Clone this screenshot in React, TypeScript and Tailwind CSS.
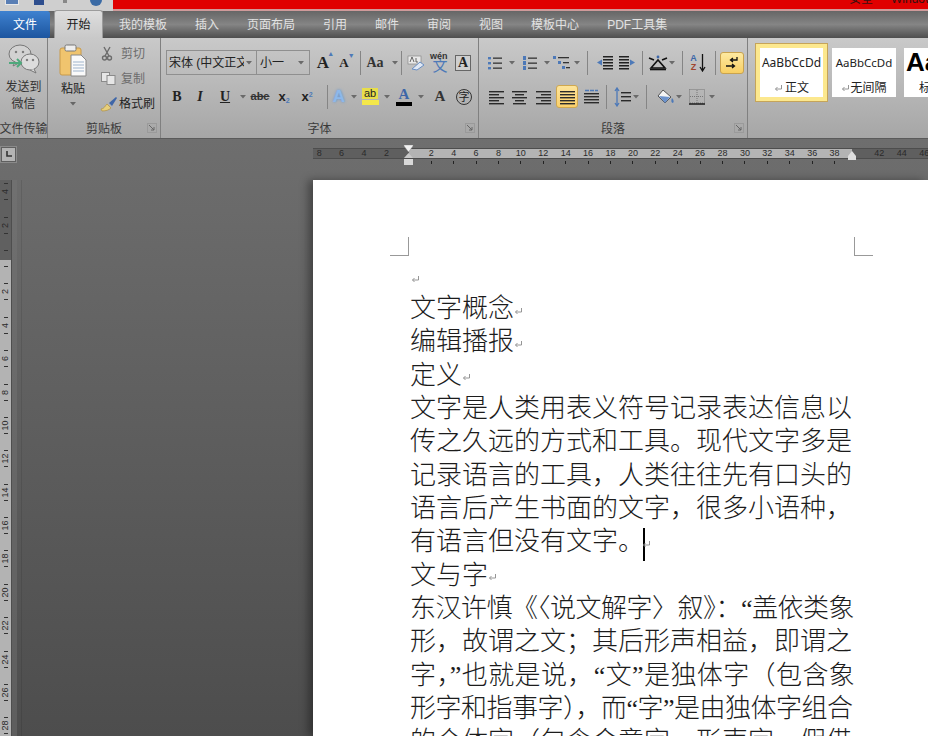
import React from "react";

const Arr = ({ w = "w-[8px]" }: { w?: string }) => (
  <div className={`${w} h-[25px] flex items-center justify-center shrink-0`}>
    <svg width="6" height="4"><path d="M0 0h6L3 3.5z" fill="#6a6a6a" /></svg>
  </div>
);
const Sep = () => <div className="w-px h-[24px] bg-[#858585] self-center shrink-0" />;
const Cell = ({ c, children }: { c: string; children?: React.ReactNode }) => (
  <div className={`${c} h-[25px] flex items-center justify-center shrink-0`}>{children}</div>
);
const L = ({ rows, w = 15 }: { rows: [number, number, number][]; w?: number }) => (
  <svg width={w} height="16">
    {rows.map(([y, a, b], i) => (
      <rect key={i} x={a} y={y} width={b - a} height="1.4" fill="#2a2a2a" />
    ))}
  </svg>
);
const Serif = "font-['Liberation_Serif','Noto_Sans_CJK_SC',serif]";

const Bullets = () => (
  <svg width="16" height="16">
    <g fill="#4d79b8"><rect x="1" y="2" width="3" height="2.4" /><rect x="1" y="7" width="3" height="2.4" /><rect x="1" y="12" width="3" height="2.4" /></g>
    <g fill="#333"><rect x="6" y="2.5" width="9" height="1.3" /><rect x="6" y="7.5" width="9" height="1.3" /><rect x="6" y="12.5" width="9" height="1.3" /></g>
  </svg>
);
const Numbers = () => (
  <svg width="16" height="16">
    <g fill="#4d79b8"><rect x="1" y="1" width="3" height="4" /><rect x="1" y="6" width="3" height="4" /><rect x="1" y="11" width="3" height="4" /></g>
    <g fill="#333"><rect x="6" y="2.5" width="9" height="1.3" /><rect x="6" y="7.5" width="9" height="1.3" /><rect x="6" y="12.5" width="9" height="1.3" /></g>
  </svg>
);
const Multi = () => (
  <svg width="18" height="18">
    <g fill="#4d79b8"><rect x="0" y="2" width="3" height="3" /><rect x="5" y="7" width="3" height="3" /><rect x="9" y="12" width="3" height="3" /></g>
    <g fill="#333"><rect x="5" y="3" width="11" height="1.3" /><rect x="10" y="8" width="6" height="1.3" /><rect x="13" y="13" width="4" height="1.3" /></g>
  </svg>
);
const Indent = ({ flip }: { flip?: boolean }) => (
  <svg width="18" height="16" className={flip ? "-scale-x-100" : ""}>
    <g fill="#222"><rect x="7" y="1" width="10" height="1.5" /><rect x="7" y="4" width="10" height="1.5" /><rect x="7" y="7" width="10" height="1.5" /><rect x="7" y="10" width="10" height="1.5" /><rect x="7" y="13" width="10" height="1.5" /></g>
    <path d="M6 4.5v6L1 7.5z" fill="#4d79b8" />
  </svg>
);
const Wechat = () => (
  <svg width="36" height="32" viewBox="0 0 36 32" fill="none" stroke="#777" strokeWidth="1">
    <ellipse cx="14" cy="11" rx="11" ry="9" fill="#d2d2d2" />
    <path d="M9 19l-2 4 6-3" fill="#d2d2d2" />
    <ellipse cx="24" cy="19" rx="9" ry="8" fill="#dcdcdc" />
    <path d="M28 26l2 4-6-3" fill="#dcdcdc" />
    <circle cx="10" cy="9" r="0.8" fill="#555" /><circle cx="17" cy="9" r="0.8" fill="#555" />
    <circle cx="21" cy="17" r="0.8" fill="#555" /><circle cx="27" cy="17" r="0.8" fill="#555" />
    <path d="M3 20h12M11 16l4 4-4 4" stroke="#4ea97c" strokeWidth="2" />
  </svg>
);
const Paste = () => (
  <svg width="28" height="33" viewBox="0 0 28 33">
    <rect x="1" y="4" width="21" height="27" rx="2" fill="#f0c46e" stroke="#c89a4a" />
    <rect x="6" y="1" width="11" height="6" rx="1.5" fill="#eee" stroke="#777" />
    <path d="M12 11h10l5 5v16H12z" fill="#fafafa" stroke="#888" />
    <path d="M14 18h11M14 21h11M14 24h11M14 27h11" stroke="#9fb4cc" />
  </svg>
);
const Brush = () => (
  <svg width="18" height="16" viewBox="0 0 18 16">
    <path d="M1 13c3 0 4-3 6-5l4 4c-2 2-5 3-9 3z" fill="#e7cf7c" stroke="#b2913f" strokeWidth=".7" />
    <path d="M9 7l7-6 1 1-5 8z" fill="#3e66a8" />
  </svg>
);
const Launcher = () => (
  <div className="w-[10px] h-[10px] border border-[#9a9a9a] flex items-center justify-center">
    <svg width="6" height="6"><path d="M0 0l5 5M5 2v3H2" stroke="#666" fill="none" /></svg>
  </div>
);
const Ret = ({ c = "" }: { c?: string }) => (
  <svg width="9" height="9" viewBox="0 0 9 9" className={`inline-block ${c}`}>
    <path d="M7.5 1v4H1.5M3.5 3L1.5 5l2 2" fill="none" stroke="#8a8a8a" strokeWidth=".9" />
  </svg>
);

const Group = ({ c, label, launcher, children }: { c: string; label: string; launcher?: boolean; children: React.ReactNode }) => (
  <div className={`${c} h-full border-r border-[#808080] flex flex-col shrink-0 relative overflow-hidden`}>
    <div className="flex-1 min-h-0">{children}</div>
    <div className="h-[18px] flex items-center justify-center text-[12px] text-[#3a3a3a] whitespace-nowrap">{label}</div>
    {launcher && <div className="absolute right-[3px] bottom-[5px]"><Launcher /></div>}
  </div>
);

const TABS = ["我的模板", "插入", "页面布局", "引用", "邮件", "审阅", "视图", "模板中心", "PDF工具集"];
const HNUMS = [8, 6, 4, 2, 0, 2, 4, 6, 8, 10, 12, 14, 16, 18, 20, 22, 24, 26, 28, 30, 32, 34, 36, 38, 0, 42, 44, 46];
const VNUMS = [4, 2, 0, 2, 4, 6, 8, 10, 12, 14, 16, 18, 20, 22, 24, 26, 28];

const DocLine = ({ children, c = "" }: { children: React.ReactNode; c?: string }) => (
  <div className={`h-[33.35px] leading-[33.35px] whitespace-nowrap ${c}`}>{children}</div>
);

export default function App() {
  return (
    <div className="w-[928px] h-[736px] overflow-hidden flex flex-col bg-[#666] font-['Liberation_Sans','Noto_Sans_CJK_SC',sans-serif]">
      {/* Title bar */}
      <div className="h-[11px] flex shrink-0 bg-[#cfcfcf]">
        <div className="w-[113px] h-full flex items-start gap-[14px] pl-[5px] overflow-hidden">
          <div className="w-[14px] h-[5px] bg-[#5a7fb5] border-b border-x border-[#e8e8e8]" />
          <div className="w-[10px] h-[5px] bg-[#2e4e8e] ml-[1px]" />
          <div className="w-[4px] h-[3px] bg-[#888] ml-[5px]" />
          <div className="w-[12px] h-[6px] rounded-b-full bg-[#3b6ba5] ml-[9px]" />
        </div>
        <div className="flex-1 flex flex-col">
          <div className="h-[9px] bg-[#e00000] flex justify-end gap-[18px] overflow-hidden">
            <span className="text-[12px] leading-[12px] -mt-[7px] text-[#3a1010]">安全</span>
            <span className="text-[12px] leading-[12px] -mt-[7px] text-[#3a1010] w-[37px] overflow-hidden whitespace-nowrap">Windows</span>
          </div>
          <div className="h-[2px] bg-[#cf9a9a]" />
        </div>
      </div>
      {/* Tabs */}
      <div className="h-[27px] shrink-0 flex items-end bg-gradient-to-b from-[#666666] via-[#858585] to-[#4e4e4e] text-[12px]">
        <div className="w-[50px] h-[27px] -mt-px rounded-tr-[3px] rounded-br-[2px] bg-gradient-to-b from-[#3f82d0] to-[#1c559f] text-white flex items-center justify-center">文件</div>
        <div className="ml-[4px] w-[49px] h-[28px] rounded-t-[3px] border-x border-t border-[#9c9c9c] bg-gradient-to-b from-[#dedede] to-[#c9c9c9] text-[#1a1a1a] flex items-center justify-center">开始</div>
        <div className="ml-[16px] h-full flex items-center gap-[28px] text-[#e2e2e2]">
          {TABS.map((t) => (
            <span key={t} className="whitespace-nowrap">{t}</span>
          ))}
        </div>
      </div>
      {/* Ribbon */}
      <div className="h-[101px] shrink-0 flex bg-gradient-to-b from-[#c9c9c9] to-[#a6a6a6] border-b border-[#5a5a5a] text-[12px] text-[#222]">
        <Group c="w-[48px]" label="文件传输">
          <div className="flex flex-col items-center pt-[5px]">
            <Wechat />
            <div className="mt-[4px] leading-[17px] text-center text-[#333]">发送到<br />微信</div>
          </div>
        </Group>
        <Group c="w-[113px]" label="剪贴板" launcher>
          <div className="flex h-full">
            <div className="w-[50px] flex flex-col items-center pt-[6px]">
              <Paste />
              <div className="mt-[4px] leading-[17px]">粘贴</div>
              <svg width="6" height="4" className="mt-[4px]"><path d="M0 0h6L3 3.5z" fill="#666" /></svg>
            </div>
            <div className="flex flex-col pt-[7px] gap-[8px] ml-[3px]">
              <div className="h-[17px] flex items-center gap-[5px] text-[#6c6c6c]">
                <svg width="13" height="15" viewBox="0 0 13 15" fill="none" stroke="#6c6c6c" strokeWidth="1.4"><path d="M3 1l5 9M9 1L4 10" /><circle cx="3.5" cy="12" r="2" /><circle cx="8.5" cy="12" r="2" /></svg>
                <span className="ml-[2px]">剪切</span>
              </div>
              <div className="h-[17px] flex items-center gap-[5px] text-[#6c6c6c]">
                <svg width="15" height="13" viewBox="0 0 15 13" fill="#e6e6e6" stroke="#8a8a8a"><rect x="0.5" y="0.5" width="8" height="9" /><rect x="6" y="3.5" width="8" height="9" /></svg>
                <span>复制</span>
              </div>
              <div className="h-[17px] flex items-center gap-[1px] -ml-[1px] text-[#222]">
                <Brush />
                <span>格式刷</span>
              </div>
            </div>
          </div>
        </Group>
        <Group c="w-[318px]" label="字体" launcher>
          <div className="pt-[12px] pl-[5px] flex flex-col gap-[9px]">
            <div className="flex items-center">
              <div className="w-[91px] h-[25px] border border-[#8f8f8f] flex items-center pl-[2px] overflow-hidden whitespace-nowrap">
                <span className="w-[75px] overflow-hidden">宋体 (中文正文)</span>
                <Arr w="w-[10px]" />
              </div>
              <div className="w-[53px] h-[25px] border border-l-0 border-[#8f8f8f] flex items-center pl-[3px] justify-between pr-[3px]">
                <span>小一</span>
                <Arr w="w-[10px]" />
              </div>
              <Cell c="w-[2px]" />
              <Cell c="w-[22px]">
                <span className={`${Serif} font-bold text-[17px] text-[#222] relative`}>A<span className="absolute -right-[5px] -top-[1px] text-[7px] text-[#4d79b8]">▲</span></span>
              </Cell>
              <Cell c="w-[20px]">
                <span className={`${Serif} font-bold text-[13px] text-[#222] relative`}>A<span className="absolute -right-[6px] -top-[2px] text-[7px] text-[#4d79b8]">▼</span></span>
              </Cell>
              <Cell c="w-[6px]" />
              <Sep />
              <Cell c="w-[28px]"><span className={`${Serif} font-bold text-[14px] text-[#333]`}>Aa</span></Cell>
              <Arr w="w-[12px]" />
              <Sep />
              <Cell c="w-[2px]" />
              <Cell c="w-[24px]">
                <svg width="18" height="16" viewBox="0 0 18 16"><rect x="1" y="1" width="13" height="8" fill="#e9e9e9" stroke="#888" strokeWidth=".7" /><path d="M5 14l8-7 4 3-7 5z" fill="#e0e8f4" stroke="#6a8fc4" /><path d="M3 7l2-5 2 5M9 3v4h2" stroke="#444" fill="none" strokeWidth=".8" /></svg>
              </Cell>
              <Cell c="w-[24px]">
                <div className="relative w-[20px] h-[20px] flex items-end justify-center">
                  <span className="absolute -top-[1px] left-0 text-[9px] leading-[9px] font-bold text-[#333]">wén</span>
                  <span className="text-[15px] leading-[15px] text-[#4d79b8]">文</span>
                </div>
              </Cell>
              <Cell c="w-[22px]">
                <span className={`${Serif} w-[16px] h-[16px] border border-[#666] bg-[#cfcfcf] flex items-center justify-center font-bold text-[14px]`}>A</span>
              </Cell>
            </div>
            <div className="flex items-center">
              <Cell c="w-[22px]"><span className={`${Serif} font-bold text-[14px]`}>B</span></Cell>
              <Cell c="w-[24px]"><span className={`${Serif} italic font-bold text-[14px]`}>I</span></Cell>
              <Cell c="w-[26px]"><span className={`${Serif} underline font-bold text-[14px]`}>U</span></Cell>
              <Arr w="w-[10px]" />
              <Cell c="w-[24px]"><span className="line-through text-[11px] font-bold text-[#333]">abe</span></Cell>
              <Cell c="w-[24px]"><span className="text-[13px] font-bold">x<sub className="text-[7px] text-[#4d79b8]">2</sub></span></Cell>
              <Cell c="w-[22px]"><span className="text-[13px] font-bold">x<sup className="text-[7px] text-[#4d79b8]">2</sup></span></Cell>
              <Cell c="w-[9px]" />
              <Sep />
              <Cell c="w-[22px]"><span className="text-[17px] font-bold text-[#8db8ea] [text-shadow:0_0_3px_#5b93d8]">A</span></Cell>
              <Arr />
              <Cell c="w-[24px]">
                <div className="flex flex-col items-center">
                  <span className="text-[11px] leading-[11px] px-[2px] bg-[#e8de4a] text-[#222]">ab</span>
                  <span className="w-[17px] h-[5px] mt-[1px] bg-[#f4e84a]" />
                </div>
              </Cell>
              <Arr w="w-[10px]" />
              <Cell c="w-[24px]">
                <div className="flex flex-col items-center">
                  <span className={`${Serif} text-[15px] leading-[13px] font-bold text-[#3d66a8]`}>A</span>
                  <span className="w-[16px] h-[4px] mt-[1px] bg-black" />
                </div>
              </Cell>
              <Arr w="w-[10px]" />
              <Cell c="w-[28px]"><span className={`${Serif} font-bold text-[15px] text-[#333]`}>A</span></Cell>
              <Cell c="w-[20px]">
                <span className="w-[16px] h-[16px] rounded-full border border-[#333] text-[11px] leading-[14px] text-center">字</span>
              </Cell>
            </div>
          </div>
        </Group>
        <Group c="w-[269px]" label="段落" launcher>
          <div className="pt-[12px] pl-[5px] flex flex-col gap-[9px]">
            <div className="flex items-center">
              <Cell c="w-[22px]"><Bullets /></Cell>
              <Arr w="w-[12px]" />
              <Cell c="w-[24px]"><Numbers /></Cell>
              <Arr w="w-[10px]" />
              <Cell c="w-[20px]"><Multi /></Cell>
              <Arr w="w-[10px]" />
              <Cell c="w-[5px]" />
              <Sep />
              <Cell c="w-[5px]" />
              <Cell c="w-[24px]"><Indent /></Cell>
              <Cell c="w-[20px]"><Indent flip /></Cell>
              <Cell c="w-[5px]" />
              <Sep />
              <Cell c="w-[4px]" />
              <Cell c="w-[22px]">
                <svg width="20" height="16" viewBox="0 0 20 16"><path d="M3 13L10 5l7 8z" fill="none" stroke="#111" strokeWidth="1.6" /><path d="M2 14.5h16" stroke="#111" strokeWidth="1.6" /><path d="M1 3l5 2M19 3l-5 2" stroke="#111" strokeWidth="1.6" /><circle cx="10" cy="2" r="1.4" fill="#3d66a8" /></svg>
              </Cell>
              <Arr w="w-[6px]" />
              <Cell c="w-[7px]" />
              <Sep />
              <Cell c="w-[3px]" />
              <Cell c="w-[24px]">
                <div className="flex items-center gap-[2px]">
                  <div className="flex flex-col items-center text-[9px] leading-[9px] font-bold">
                    <span className="text-[#3d66a8]">A</span>
                    <span className="text-[#a0452e]">Z</span>
                  </div>
                  <svg width="7" height="18"><path d="M3.5 0v16M1 13l2.5 4L6 13" stroke="#111" fill="none" strokeWidth="1.3" /></svg>
                </div>
              </Cell>
              <Cell c="w-[5px]" />
              <Sep />
              <Cell c="w-[4px]" />
              <div className="w-[24px] h-[22px] rounded-[3px] border border-[#c9a34e] bg-gradient-to-b from-[#fde9a0] to-[#f8cf62] flex items-center justify-center">
                <svg width="14" height="14" viewBox="0 0 14 14" fill="none" stroke="#111" strokeWidth="1.3"><path d="M12 1v3H6M8 2L5.5 4 8 6" /><path d="M1 10h8M7 8l2.5 2L7 12" /></svg>
              </div>
            </div>
            <div className="flex items-center">
              <Cell c="w-[24px]"><L rows={[[2, 0, 15], [5, 0, 10], [8, 0, 15], [11, 0, 10], [14, 0, 15]]} /></Cell>
              <Cell c="w-[23px]"><L rows={[[2, 0, 15], [5, 3, 12], [8, 0, 15], [11, 3, 12], [14, 1, 14]]} /></Cell>
              <Cell c="w-[24px]"><L rows={[[2, 0, 15], [5, 5, 15], [8, 0, 15], [11, 5, 15], [14, 0, 15]]} /></Cell>
              <Cell c="w-[1px]" />
              <div className="w-[22px] h-[23px] rounded-[3px] border border-[#d0a84f] bg-gradient-to-b from-[#fde49a] to-[#fbd06a] flex items-center justify-center">
                <L rows={[[2, 0, 15], [5, 0, 15], [8, 0, 15], [11, 0, 15], [14, 0, 15]]} />
              </div>
              <Cell c="w-[1px]" />
              <Cell c="w-[24px]">
                <svg width="15" height="17"><path d="M1 2.5h13" stroke="#4d79b8" strokeWidth="1.4" strokeDasharray="4 1" /><g fill="#2a2a2a"><rect y="5" width="15" height="1.4" /><rect y="8" width="15" height="1.4" /><rect y="11" width="15" height="1.4" /><rect y="14" width="15" height="1.4" /></g></svg>
              </Cell>
              <Cell c="w-[3px]" />
              <Sep />
              <Cell c="w-[4px]" />
              <Cell c="w-[22px]">
                <svg width="17" height="20"><path d="M3 1v18M1 4l2-3 2 3M1 16l2 3 2-3" stroke="#4d79b8" fill="none" strokeWidth="1.3" /><g fill="#2a2a2a"><rect x="7" y="5" width="10" height="1.4" /><rect x="7" y="9" width="10" height="1.4" /><rect x="7" y="13" width="10" height="1.4" /></g></svg>
              </Cell>
              <Arr w="w-[6px]" />
              <Cell c="w-[7px]" />
              <Sep />
              <Cell c="w-[7px]" />
              <Cell c="w-[22px]">
                <svg width="19" height="18" viewBox="0 0 19 18"><path d="M7 2l8 7-6 6-7-7z" fill="#f4f4f4" stroke="#555" /><path d="M3 8l11 1-5 6z" fill="#6b92cc" /><path d="M16 10c2 2 2 4 1 5-2 0-2-3-1-5z" fill="#4d79b8" /></svg>
              </Cell>
              <Arr w="w-[6px]" />
              <Cell c="w-[3px]" />
              <Cell c="w-[24px]">
                <svg width="16" height="16"><rect x=".5" y=".5" width="15" height="13.5" fill="none" stroke="#777" strokeDasharray="1 1" /><path d="M8 1v13M1 7.5h14" stroke="#777" strokeDasharray="1 1" /><path d="M0 15h16" stroke="#111" strokeWidth="1.4" /></svg>
              </Cell>
              <Arr w="w-[6px]" />
            </div>
          </div>
        </Group>
        <div className="flex-1 flex pl-[7px] pt-[5px] overflow-hidden">
          <div className="w-[73px] h-[59px] shrink-0 border border-[#c5a45a] bg-[#fce88e] p-[4px]">
            <div className="h-full bg-white flex flex-col items-center text-[#222]">
              <span className="font-['Noto_Sans'] text-[12px] leading-[16px] mt-[7px]">AaBbCcDd</span>
              <span className="mt-[9px] leading-[16px]"><Ret c="mr-[2px]" />正文</span>
            </div>
          </div>
          <div className="w-[64px] h-[49px] shrink-0 mt-[5px] ml-[4px] bg-white flex flex-col items-center text-[#222]">
            <span className="font-['Noto_Sans'] text-[11.5px] leading-[16px] mt-[7px]">AaBbCcDd</span>
            <span className="mt-[9px] text-[12px] leading-[16px] whitespace-nowrap"><Ret />无间隔</span>
          </div>
          <div className="w-[40px] h-[49px] shrink-0 mt-[5px] ml-[8px] bg-white flex flex-col pl-[2px] text-[#222]">
            <span className="font-bold text-[26px] leading-[28px] text-black whitespace-nowrap">Aa</span>
            <span className="text-[12px] leading-[16px] mt-[4px] ml-[13px]">标</span>
          </div>
        </div>
      </div>
      {/* Work area */}
      <div className="flex-1 min-h-0 flex bg-gradient-to-b from-[#6e6e6e] to-[#4d4d4d] overflow-hidden">
        <div className="w-[313px] shrink-0 flex flex-col relative">
          <div className="w-[17px] h-[17px] mt-[7px] border border-[#8a8a8a] bg-[#5f5f5f] p-px">
            <div className="w-full h-full bg-[#b4b4b4] flex items-center justify-center">
              <svg width="7" height="7"><path d="M2 0v5h5" stroke="#333" strokeWidth="1.6" fill="none" /></svg>
            </div>
          </div>
          <div className="mt-[17px] flex-1 min-h-0 flex">
            <div className="w-[12px] overflow-hidden border-r border-[#4e4e4e] bg-[linear-gradient(180deg,#606060_80px,#b3b3b3_80px)]">
              <div className="-mt-[5px] text-[#2a2a2a]">
                {VNUMS.map((n, i) => (
                  <div key={i} className="h-[33.4px] flex flex-col items-center justify-center">
                    <span className="w-[4px] h-px bg-[#333]" />
                    <span className="h-[15px] flex items-center justify-center -rotate-90 text-[9px] leading-[9px] whitespace-nowrap">{i === 2 ? "" : n}</span>
                    <span className="w-[4px] h-px bg-[#333]" />
                  </div>
                ))}
              </div>
            </div>
            <div className="w-[5px] bg-[#787878] opacity-40" />
            <div className="w-[5px] border-r border-[#00000018]" />
          </div>
        </div>
        <div className="flex-1 min-w-0 flex flex-col relative">
          <div className="mt-[9px] h-[11px] overflow-hidden border-y border-[#4d4d4d] bg-[linear-gradient(90deg,#5f5f5f_96px,#b4b4b4_96px,#b4b4b4_539px,#5f5f5f_539px)] flex pl-0">
            <div className="flex -ml-[5px] text-[#2a2a2a]">
              {HNUMS.map((n, i) => (
                <span key={i} className="w-[22.42px] shrink-0 text-center text-[9px] leading-[9px]">{i === 4 || i === 24 ? "" : n}</span>
              ))}
            </div>
          </div>
          <div className="h-[7px] flex -ml-[5px] pt-[2px]">
            {HNUMS.map((n, i) => (
              <div key={i} className="w-[22.42px] shrink-0 flex justify-center">
                {i > 4 && i < 24 && <span className="w-px h-[3px] bg-[#222]" />}
              </div>
            ))}
          </div>
          {/* indent markers */}
          <svg width="12" height="21" className="absolute left-[90px] top-[6px]">
            <path d="M1 0h9v1L5.5 7 1 1z" fill="#f0f0f0" stroke="#888" strokeWidth=".4" />
            <path d="M5.5 8L10 13H1z" fill="#c9c9c9" />
            <rect x="1" y="14" width="9" height="6" fill="#d8d8d8" />
          </svg>
          <svg width="10" height="10" className="absolute left-[534px] top-[12px]">
            <path d="M5 0L9 5v4H1V5z" fill="#dedede" />
          </svg>
          {/* page */}
          <div className="mt-[14px] flex-1 min-h-0 bg-white relative overflow-hidden pl-[97px] shadow-[-5px_0_8px_rgba(0,0,0,0.35)] text-[26px] font-light text-[#1c1c1c] font-['Liberation_Serif','Noto_Sans_CJK_SC',serif]">
            <div className="absolute left-[77px] top-[57px] w-[19px] h-[19px] border-r border-b border-[#999]" />
            <div className="absolute left-[541px] top-[57px] w-[19px] h-[19px] border-l border-b border-[#999]" />
            <div className="h-[112px] pt-[95px] leading-[0] pl-px"><Ret /></div>
            <DocLine>文字概念<Ret /></DocLine>
            <DocLine>编辑播报<Ret /></DocLine>
            <DocLine>定义<Ret /></DocLine>
            <DocLine>文字是人类用表义符号记录表达信息以</DocLine>
            <DocLine>传之久远的方式和工具。现代文字多是</DocLine>
            <DocLine>记录语言的工具，人类往往先有口头的</DocLine>
            <DocLine>语言后产生书面的文字，很多小语种，</DocLine>
            <DocLine>有语言但没有文字。<span className="inline-block w-[2px] h-[33px] bg-black align-middle -ml-[1px]" /><Ret c="-ml-[3px]" /></DocLine>
            <DocLine>文与字<Ret /></DocLine>
            <DocLine c="tracking-[-0.5px]">东汉许慎《〈说文解字〉叙》：“盖依类象</DocLine>
            <DocLine>形，故谓之文；其后形声相益，即谓之</DocLine>
            <DocLine c="tracking-[0.4px]">字，”也就是说，“文”是独体字（包含象</DocLine>
            <DocLine c="tracking-[-0.5px]">形字和指事字），而“字”是由独体字组合</DocLine>
            <DocLine>的合体字（包含会意字、形声字、假借</DocLine>
          </div>
        </div>
      </div>
    </div>
  );
}
